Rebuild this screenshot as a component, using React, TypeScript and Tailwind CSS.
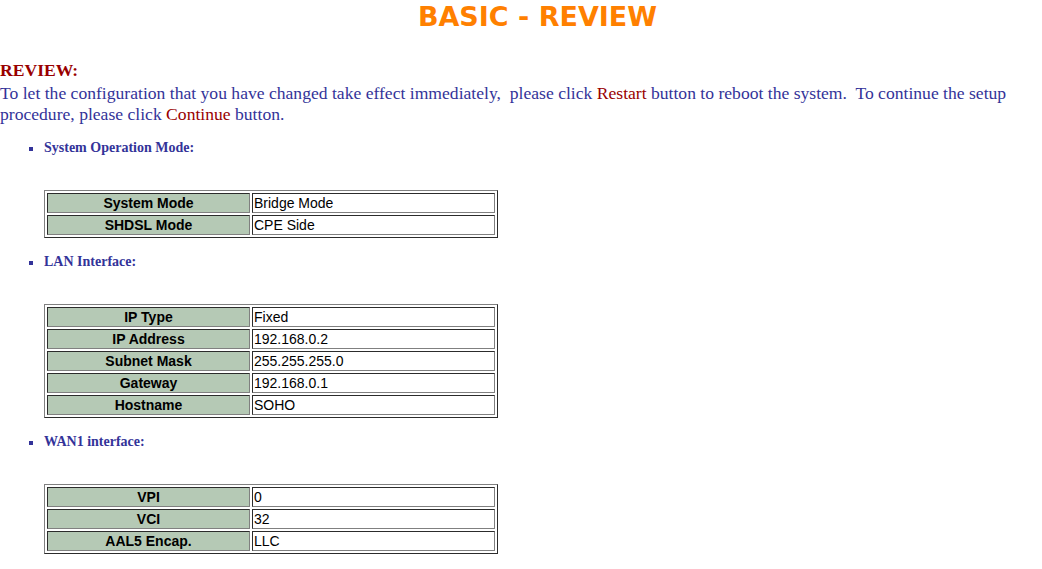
import React from "react";

type Row = [string, string];

const SECTIONS: { title: string; rows: Row[] }[] = [
  {
    title: "System Operation Mode:",
    rows: [
      ["System Mode", "Bridge Mode"],
      ["SHDSL Mode", "CPE Side"],
    ],
  },
  {
    title: "LAN Interface:",
    rows: [
      ["IP Type", "Fixed"],
      ["IP Address", "192.168.0.2"],
      ["Subnet Mask", "255.255.255.0"],
      ["Gateway", "192.168.0.1"],
      ["Hostname", "SOHO"],
    ],
  },
  {
    title: "WAN1 interface:",
    rows: [
      ["VPI", "0"],
      ["VCI", "32"],
      ["AAL5 Encap.", "LLC"],
    ],
  },
];

function ReviewTable({ rows }: { rows: Row[] }) {
  return (
    <table className="w-[454px] border-separate border-spacing-[2px] border border-solid border-t-[#808080] border-l-[#808080] border-b-[#2c2c2c] border-r-[#2c2c2c] font-['Liberation_Sans',Arial,sans-serif] text-[14px] leading-[16px] text-black">
      <tbody>
        {rows.map(([label, value]) => (
          <tr key={label}>
            <td className="w-[203px] p-[1px] text-center font-bold bg-[#b5c9b5] border border-solid border-t-[#2c2c2c] border-l-[#2c2c2c] border-b-[#808080] border-r-[#808080]">
              {label}
            </td>
            <td className="p-[1px] text-left border border-solid border-t-[#2c2c2c] border-l-[#2c2c2c] border-b-[#808080] border-r-[#808080]">
              {value}
            </td>
          </tr>
        ))}
      </tbody>
    </table>
  );
}

export default function App() {
  return (
    <div className="min-h-[569px] bg-white font-['Liberation_Serif','Times_New_Roman',serif] text-[#333399]">
      {/* Page heading */}
      <div className="pl-[33px] pt-[1px] h-[32px] text-center font-['DejaVu_Sans',Verdana,sans-serif] font-bold text-[27px] leading-[32px] text-[#ff8000]">
        BASIC - REVIEW
      </div>

      <div className="mt-[28px] text-[17.6px] leading-[21px] font-bold text-[#990000]">
        REVIEW:
      </div>
      <p className="mt-[2px] text-[17.6px] leading-[21px]">
        To let the configuration that you have changed take effect
        immediately,&nbsp; please click{" "}
        <span className="text-[#990000]">Restart</span> button to reboot the
        system.&nbsp; To continue the setup procedure, please click{" "}
        <span className="text-[#990000]">Continue</span> button.
      </p>

      <div className="mt-[15px] pl-[44px]">
        {SECTIONS.map((section, i) => (
          <div key={section.title} className={i === 0 ? "" : "mt-[16px]"}>
            <div className="relative text-[14px] leading-[16px] font-bold">
              <span className="absolute left-[-15px] top-[7px] w-[4px] h-[4px] bg-[#333399]" />
              {section.title}
            </div>
            <div className="mt-[34px]">
              <ReviewTable rows={section.rows} />
            </div>
          </div>
        ))}
      </div>
    </div>
  );
}
